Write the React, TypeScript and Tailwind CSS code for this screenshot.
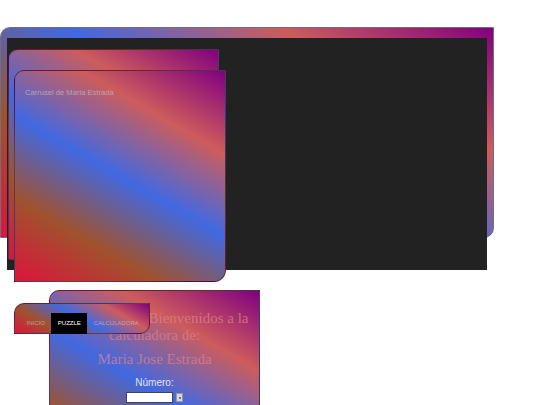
export default function App() {
  const gradient =
    'bg-[linear-gradient(30deg,#dc143c,#a0522d,#4169e1,#cd5c5c,#800080)]';

  return (
    <div className="w-[540px] h-[405px] overflow-hidden bg-white font-['Liberation_Sans',Arial,sans-serif]">
      <div className="pt-[27px]">
        <header
          className={`w-[494px] h-[211px] rounded-tl-[10px] rounded-br-[10px] border border-gray-500 pt-[10px] pl-[6px] ${gradient}`}
        >
          <div className="w-[480px] h-[232px] bg-[#222222] pt-[11px] pl-[1px]">
            <div
              className={`w-[211px] h-[211px] rounded-tl-[10px] rounded-br-[12px] border border-black/40 ${gradient}`}
            />
            <div
              className={`-mt-[190px] ml-[6px] w-[212px] h-[212px] rounded-tl-[10px] rounded-br-[12px] border border-black/40 pt-[16px] pl-[10px] ${gradient}`}
            >
              <p className="text-[7.6px] text-[#c4c4c4]/70">Carrusel de Maria Estrada</p>
            </div>
          </div>
        </header>
      </div>

      <nav
        className={`relative z-10 mt-[65px] ml-[14px] w-[136px] h-[31px] rounded-tl-[10px] rounded-br-[10px] border border-black/40 pt-[9px] pl-[5px] flex ${gradient}`}
      >
        <a className="h-[21px] px-[6.5px] flex items-center text-[6px] text-[#c8c8c8]/70">INICIO</a>
        <a className="h-[21px] px-[6.5px] flex items-center text-[6px] text-white bg-black">PUZZLE</a>
        <a className="h-[21px] px-[6.5px] flex items-center text-[6px] text-[#c8c8c8]/70">CALCULADORA</a>
      </nav>

      <main
        className={`-mt-[44px] ml-[49px] w-[211px] h-[200px] rounded-tl-[10px] border border-black/40 pt-[19px] px-[8px] text-center ${gradient}`}
      >
        <h1 className="indent-[88px] font-['Liberation_Serif','Times_New_Roman',serif] text-[15px] leading-[16.5px] text-[#e08088]/75">
          Bienvenidos a la calculadora de:
        </h1>
        <h2 className="mt-[8px] font-['Liberation_Serif','Times_New_Roman',serif] text-[15px] leading-[16px] text-[#e08088]/75">
          Maria Jose Estrada
        </h2>
        <label className="block mt-[10px] text-[10px] leading-[12px] text-[#e4e4e4]">Número:</label>
        <div className="mt-[3px] flex justify-center items-center gap-[3px]">
          <input
            type="text"
            className="w-[47px] h-[11px] bg-white border border-[#444] outline-none"
          />
          <div className="w-[7px] h-[9px] bg-[#d8d8d8] border border-[#999] flex items-center justify-center">
            <span className="block w-[2px] h-[2px] bg-[#777]" />
          </div>
        </div>
      </main>
    </div>
  );
}
